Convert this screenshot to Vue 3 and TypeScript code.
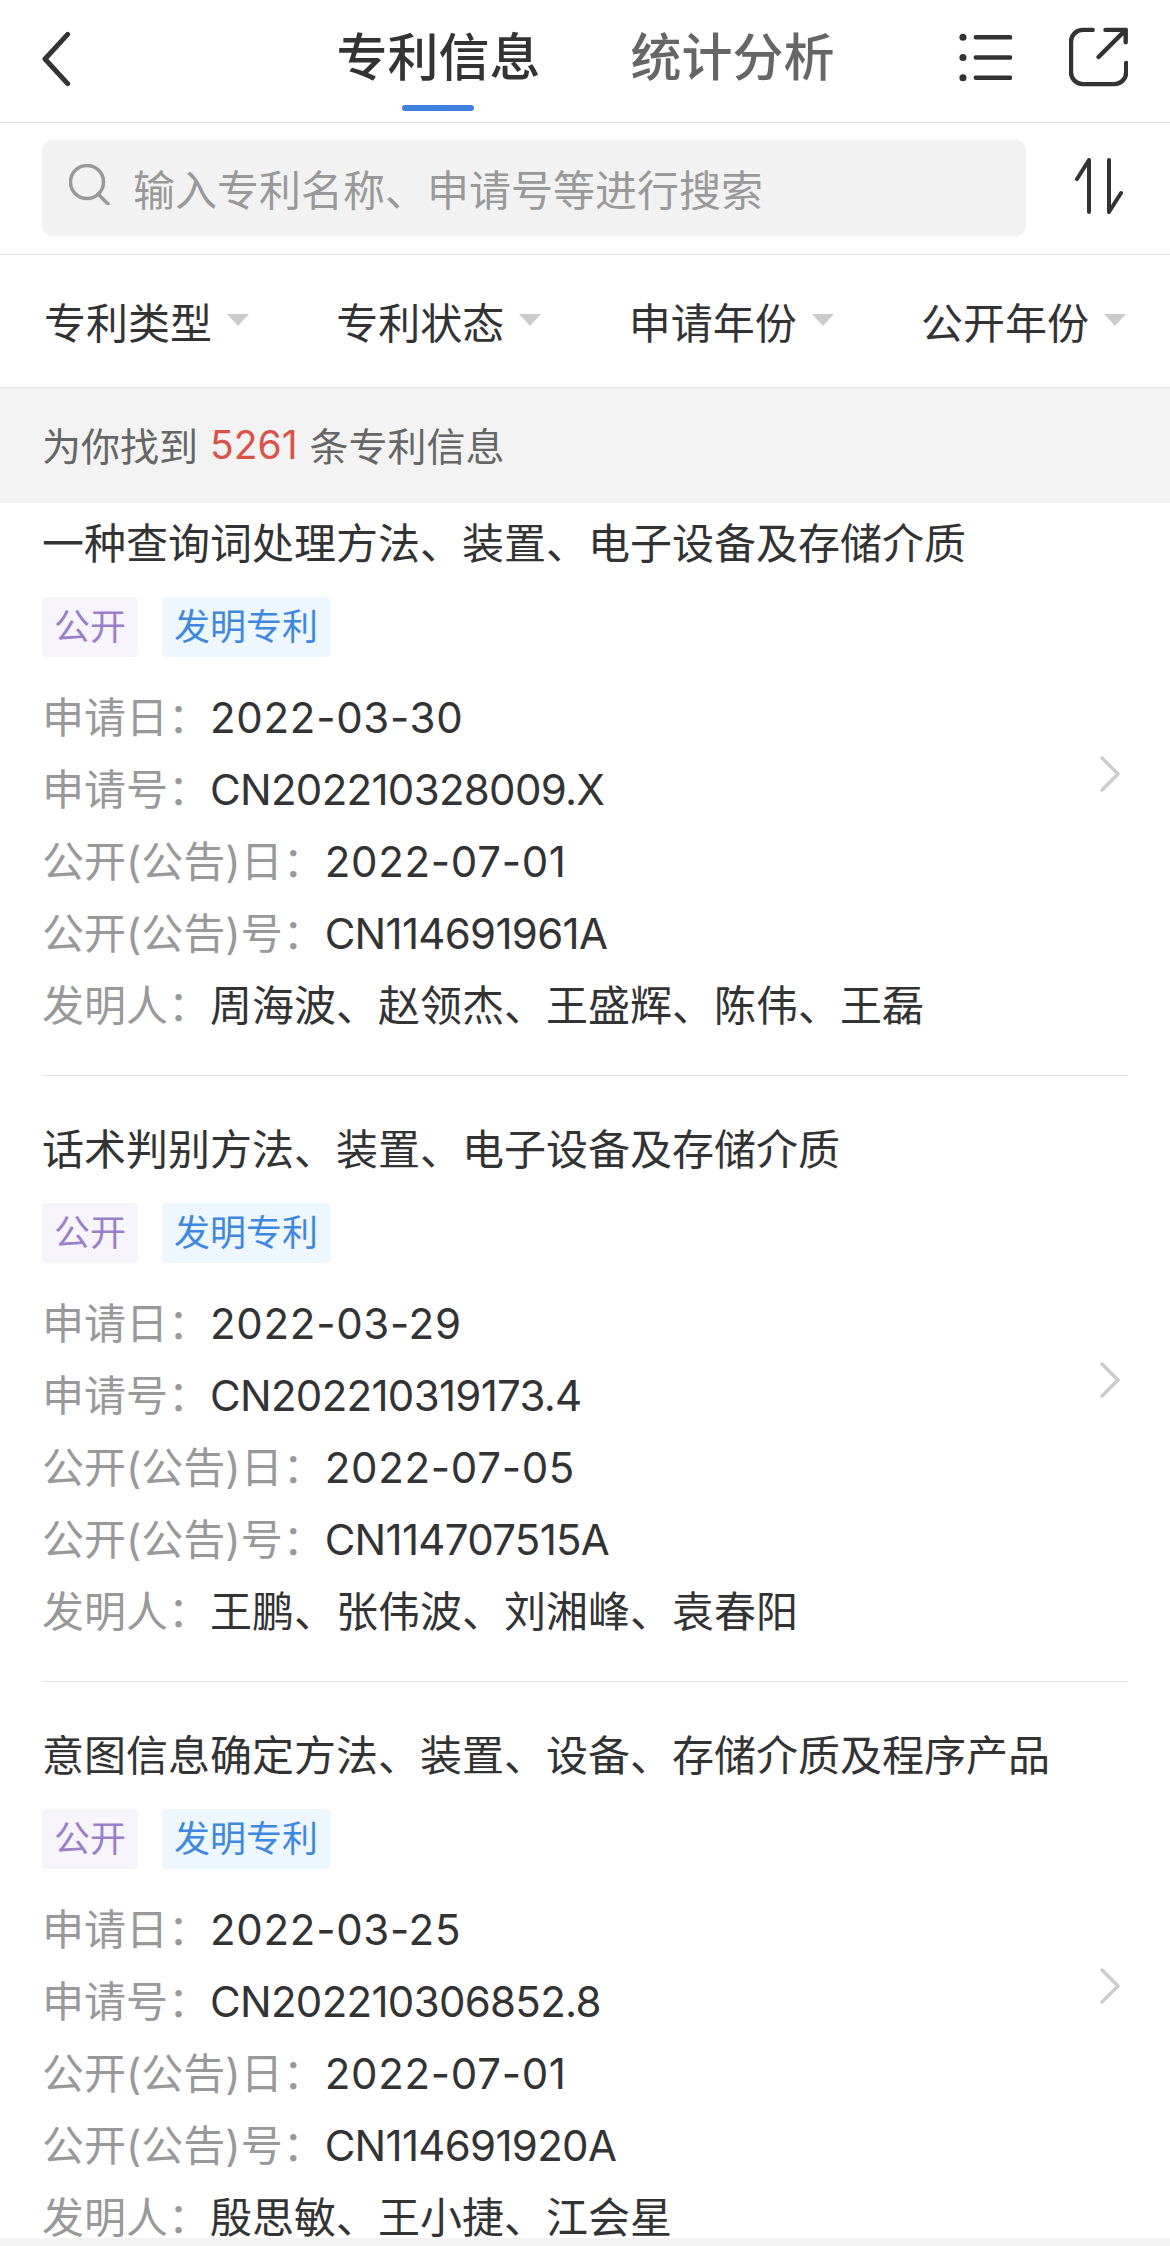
<script setup lang="ts">
interface Patent {
  title: string
  applyDate: string
  applyNo: string
  publicDate: string
  publicNo: string
  inventors: string
}

const filters = ['专利类型', '专利状态', '申请年份', '公开年份']

const patents: Patent[] = [
  {
    title: '一种查询词处理方法、装置、电子设备及存储介质',
    applyDate: '2022-03-30',
    applyNo: 'CN202210328009.X',
    publicDate: '2022-07-01',
    publicNo: 'CN114691961A',
    inventors: '周海波、赵领杰、王盛辉、陈伟、王磊'
  },
  {
    title: '话术判别方法、装置、电子设备及存储介质',
    applyDate: '2022-03-29',
    applyNo: 'CN202210319173.4',
    publicDate: '2022-07-05',
    publicNo: 'CN114707515A',
    inventors: '王鹏、张伟波、刘湘峰、袁春阳'
  },
  {
    title: '意图信息确定方法、装置、设备、存储介质及程序产品',
    applyDate: '2022-03-25',
    applyNo: 'CN202210306852.8',
    publicDate: '2022-07-01',
    publicNo: 'CN114691920A',
    inventors: '殷思敏、王小捷、江会星'
  }
]
</script>

<template>
  <div class="page">
    <header class="top-bar">
      <svg class="back-icon" viewBox="0 0 29 56" fill="none">
        <path d="M26 3 3 28l23 25" />
      </svg>
      <div class="tabs">
        <div class="tab active">专利信息</div>
        <div class="tab">统计分析</div>
      </div>
      <svg class="list-icon" viewBox="0 0 54 49" fill="none">
        <circle cx="4" cy="4" r="3.6" />
        <circle cx="4" cy="24.5" r="3.6" />
        <circle cx="4" cy="45" r="3.6" />
        <path d="M17 4h35M17 24.5h35M17 45h35" />
      </svg>
      <svg class="share-icon" viewBox="0 0 60 60" fill="none">
        <path d="M24 2.500H14A12 12 0 0 0 2 14.500v31a12 12 0 0 0 12 12h32a12 12 0 0 0 12-12V36" />
        <path d="M30 30 57.500 2.500M37 2.500h20.500V15" />
      </svg>
    </header>

    <div class="search-row">
      <div class="search-box">
        <svg class="search-icon" viewBox="0 0 41 41" fill="none">
          <circle cx="18" cy="18" r="16.500" />
          <path d="m29 30 10 10" />
        </svg>
        <span>输入专利名称、申请号等进行搜索</span>
      </div>
      <svg class="sort-icon" viewBox="0 0 48 56" fill="none">
        <path d="M2 21 14 2v52M46 35 34 54V2" />
      </svg>
    </div>

    <div class="filter-row">
      <div v-for="name in filters" :key="name" class="filter">
        <span>{{ name }}</span>
        <i class="caret"></i>
      </div>
    </div>

    <div class="result-bar">为你找到 <em>5261</em> 条专利信息</div>

    <main class="list">
      <article v-for="item in patents" :key="item.applyNo" class="patent">
        <div class="patent-main">
          <h3>{{ item.title }}</h3>
          <div class="tags">
            <span class="tag purple">公开</span>
            <span class="tag blue">发明专利</span>
          </div>
          <div class="line"><label>申请日：</label><span class="date">{{ item.applyDate }}</span></div>
          <div class="line"><label>申请号：</label><span class="code">{{ item.applyNo }}</span></div>
          <div class="line"><label>公开(公告)日：</label><span class="date">{{ item.publicDate }}</span></div>
          <div class="line"><label>公开(公告)号：</label><span class="code">{{ item.publicNo }}</span></div>
          <div class="line"><label>发明人：</label><span>{{ item.inventors }}</span></div>
        </div>
        <svg class="chevron" viewBox="0 0 20 36" fill="none">
          <path d="m2 2 16 16L2 34" />
        </svg>
      </article>
    </main>

    <div class="bottom-strip"></div>
  </div>
</template>

<style>
html,
body {
  margin: 0;
  background: #fff;
}
</style>

<style scoped>
.page {
  width: 1170px;
  height: 2246px;
  display: flex;
  flex-direction: column;
  overflow: hidden;
  background: #fff;
  color: #333;
  font-family: Inter, "Noto Sans CJK SC", sans-serif;
}

.top-bar {
  position: relative;
  height: 122px;
  flex-shrink: 0;
  display: flex;
  align-items: center;
  padding: 0 42px;
  box-sizing: content-box;
  border-bottom: 1px solid #e4e4e4;
}

.back-icon {
  width: 29px;
  height: 56px;
  margin-bottom: 5px;
}
.back-icon path {
  stroke: #333;
  stroke-width: 5;
  stroke-linecap: round;
  stroke-linejoin: round;
}

.tabs {
  display: flex;
  gap: 90px;
  margin-left: 266px;
  margin-right: 124px;
}
.tab {
  position: relative;
  width: 204px;
  font-size: 51px;
  line-height: 116px;
  height: 122px;
  font-weight: 500;
  color: #666;
}
.tab.active {
  color: #333;
}
.tab.active::after {
  content: "";
  position: absolute;
  left: 65px;
  top: 105px;
  width: 72px;
  height: 6px;
  border-radius: 3px;
  background: #3f80de;
}

.list-icon {
  width: 54px;
  height: 49px;
  margin-bottom: 7px;
}
.list-icon circle {
  fill: #333;
}
.list-icon path {
  stroke: #333;
  stroke-width: 4.500;
  stroke-linecap: round;
}

.share-icon {
  width: 60px;
  height: 60px;
  margin-left: 57px;
  margin-bottom: 8px;
}
.share-icon path {
  stroke: #333;
  stroke-width: 4.500;
  stroke-linecap: round;
  stroke-linejoin: round;
}

.search-row {
  height: 131px;
  flex-shrink: 0;
  display: flex;
  align-items: center;
  padding: 0 47px 0 42px;
  border-bottom: 1px solid #e4e4e4;
}
.search-box {
  width: 984px;
  height: 96px;
  margin-bottom: 2px;
  display: flex;
  align-items: center;
  gap: 23px;
  padding-left: 27px;
  box-sizing: border-box;
  border-radius: 10px;
  background: #f2f2f2;
  font-size: 42px;
  color: #999;
}
.search-icon {
  width: 41px;
  height: 41px;
  margin-bottom: 6px;
}
.search-icon circle,
.search-icon path {
  stroke: #999;
  stroke-width: 3.500;
  stroke-linecap: round;
}
.sort-icon {
  width: 48px;
  height: 56px;
  margin-left: auto;
  margin-bottom: 6px;
}
.sort-icon path {
  stroke: #333;
  stroke-width: 4;
  stroke-linecap: round;
  stroke-linejoin: round;
}

.filter-row {
  height: 132px;
  flex-shrink: 0;
  display: flex;
  justify-content: space-between;
  align-items: center;
  padding: 0 44px 2px 44px;
  box-sizing: border-box;
  font-size: 42px;
}
.filter {
  display: flex;
  align-items: center;
  gap: 15px;
}
.caret {
  width: 0;
  height: 0;
  border-left: 11px solid transparent;
  border-right: 11px solid transparent;
  border-top: 12px solid #ccc;
}

.result-bar {
  height: 116px;
  flex-shrink: 0;
  display: flex;
  align-items: center;
  gap: 12px;
  padding: 0 0 3px 42px;
  border-top: 1px solid #e4e4e4;
  background: #f3f3f3;
  box-sizing: border-box;
  font-size: 39px;
  color: #666;
}
.result-bar em {
  font-style: normal;
  color: #d9534a;
}

.list {
  flex: 1;
  min-height: 0;
  overflow: hidden;
}
.patent {
  display: flex;
  align-items: center;
  margin: 0 42px;
  padding: 44px 0 33px;
  border-bottom: 1px solid #e4e4e4;
}
.patent:first-child {
  margin-top: -33px;
}
.patent-main {
  flex: 1;
  min-width: 0;
}
.patent h3 {
  margin: 0;
  font-size: 42px;
  font-weight: 400;
  line-height: 60px;
  white-space: nowrap;
}
.tags {
  display: flex;
  gap: 24px;
  margin: 23px 0 25px;
}
.tag {
  height: 60px;
  line-height: 60px;
  padding: 0 12px;
  border-radius: 4px;
  font-size: 36px;
}
.tag.purple {
  color: #9b7fc9;
  background: #f7f5fb;
}
.tag.blue {
  color: #3f88e0;
  background: #eef6fe;
}
.line {
  height: 72px;
  line-height: 72px;
  font-size: 42px;
  white-space: nowrap;
}
.line label {
  color: #999;
}
.date {
  letter-spacing: 0.700px;
}
.code {
  letter-spacing: -0.700px;
}
.chevron {
  width: 20px;
  height: 36px;
  margin-right: 8px;
  margin-bottom: 8px;
  flex-shrink: 0;
}
.chevron path {
  stroke: #ccc;
  stroke-width: 3.500;
  stroke-linecap: round;
  stroke-linejoin: round;
}

.bottom-strip {
  height: 8px;
  flex-shrink: 0;
  background: #f3f3f3;
}
</style>
